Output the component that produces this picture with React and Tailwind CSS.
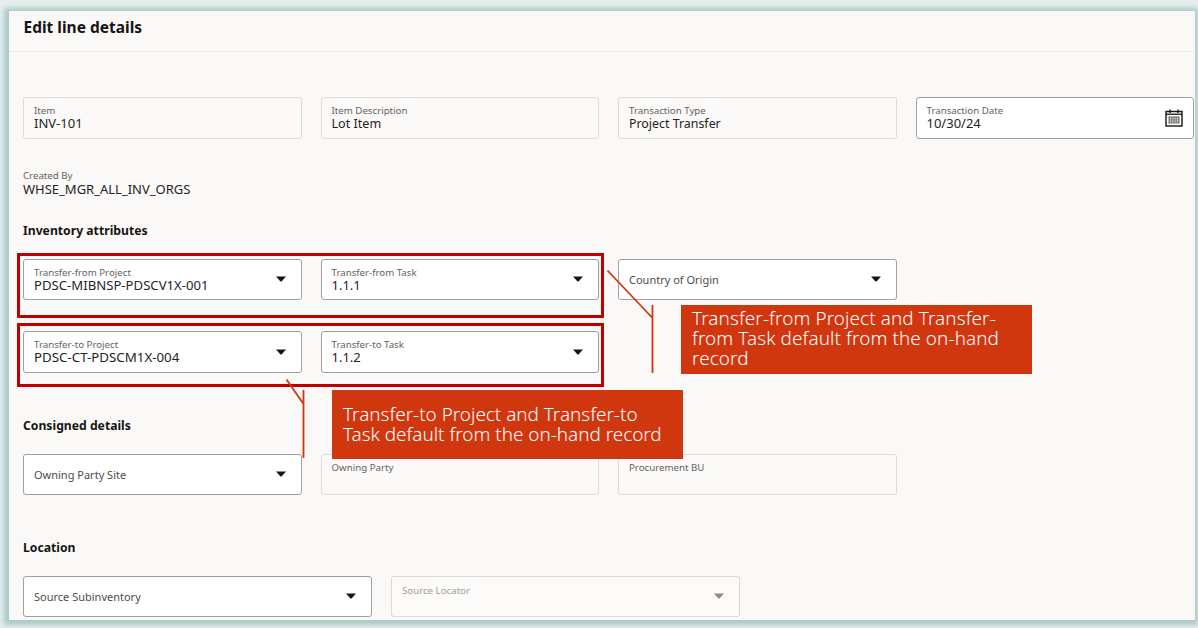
const FONT = "font-['Noto_Sans','Open_Sans',sans-serif]";

function Caret({ muted }) {
  return (
    <svg width="10" height="6" viewBox="0 0 10 6" className="shrink-0">
      <path d="M0 0.5h10L5.5 5.5h-1z" fill={muted ? "#8f8c88" : "#161513"} />
    </svg>
  );
}

function CalendarIcon() {
  return (
    <svg width="18" height="18" viewBox="0 0 18 18" className="shrink-0">
      <rect x="1" y="2.5" width="16" height="14.5" fill="none" stroke="#161513" strokeWidth="1.4" />
      <path d="M1 5.2h16" stroke="#161513" strokeWidth="1.3" />
      <path d="M5 0.5v3.5M13 0.5v3.5" stroke="#161513" strokeWidth="1.4" />
      <path d="M3.5 7.5h11v7h-11z" fill="#5f5c58" />
      <path d="M3.5 9.3h11M3.5 11.1h11M3.5 12.9h11M5.7 7.5v7M7.9 7.5v7M10.1 7.5v7M12.3 7.5v7" stroke="#f1efed" strokeWidth="0.5" />
    </svg>
  );
}

function Field({ label, value, valueClass = "text-[13px]", variant = "readonly", caret, calendar, floating }) {
  const box =
    variant === "active"
      ? "bg-white border-[#a3a09c]"
      : variant === "disabled"
      ? "bg-[#fcfbfa] border-[#dcdad7]"
      : "bg-[#fbfaf8] border-[#dedcd9]";
  return (
    <div className={`relative h-[41.5px] rounded-[3px] border flex items-center pl-[10px] pr-[15px] ${box}`}>
      <div className="flex-1 min-w-0">
        {floating ? (
          <div className="mt-[2px] text-[11px] leading-[14px] text-[#4f4c48]">{label}</div>
        ) : value ? (
          <div className="mt-[2px]">
            <div className="text-[9.7px] leading-[10px] text-[#65625e]">{label}</div>
            <div className={`leading-[15px] text-[#25231f] ${valueClass}`}>{value}</div>
          </div>
        ) : (
          <div className={variant === "disabled" ? "h-[22px]" : "h-[24px]"}>
            <div className={`text-[9.7px] leading-[11px] ${variant === "disabled" ? "text-[#a09d99]" : "text-[#65625e]"}`}>
              {label}
            </div>
          </div>
        )}
      </div>
      {caret && <Caret muted={caret === "muted"} />}
      {calendar && <div className="-mr-[5px]"><CalendarIcon /></div>}
    </div>
  );
}

function Heading({ children, className }) {
  return <h3 className={`text-[12.2px] leading-[16px] font-bold text-[#161513] ${className}`}>{children}</h3>;
}

function Row({ children, className = "" }) {
  return <div className={`grid grid-cols-4 gap-x-[19px] ${className}`}>{children}</div>;
}

function Callout({ className, children }) {
  return (
    <div className={`absolute bg-[#d1370f] text-white text-[18.9px] leading-[20px] font-light pl-[11px] whitespace-nowrap ${className}`}>
      {children}
    </div>
  );
}

export default function App() {
  return (
    <div className={`relative w-[1198px] h-[628px] overflow-hidden bg-[#e4eeed] ${FONT}`}>
      <div className="absolute left-[9px] top-[11px] w-[1186px] h-[609px] bg-[#faf9f7] shadow-[-1px_1px_5px_4px_#a9c9c6]">
        <header className="h-[41px] border-b border-[#efedeb] pl-[14.5px] pt-[6px]">
          <h2 className="text-[15.5px] leading-[20px] font-bold text-[#161513]">Edit line details</h2>
        </header>

        <div className="pl-[14px] pr-[1px]">
          <Row className="mt-[45px]">
            <Field label="Item" value="INV-101" />
            <Field label="Item Description" value="Lot Item" valueClass="text-[12.6px]" />
            <Field label="Transaction Type" value="Project Transfer" valueClass="text-[12.4px]" />
            <Field label="Transaction Date" value="10/30/24" variant="active" calendar />
          </Row>

          <div className="mt-[31px]">
            <div className="text-[9.7px] leading-[11px] text-[#65625e]">Created By</div>
            <div className="text-[13px] leading-[16px] text-[#25231f]">WHSE_MGR_ALL_INV_ORGS</div>
          </div>

          <Heading className="mt-[26px]">Inventory attributes</Heading>

          <Row className="mt-[20px]">
            <Field label="Transfer-from Project" value="PDSC-MIBNSP-PDSCV1X-001" valueClass="text-[13.15px]" variant="active" caret="1" />
            <Field label="Transfer-from Task" value="1.1.1" variant="active" caret="1" />
            <Field label="Country of Origin" variant="active" caret="1" floating />
          </Row>

          <Row className="mt-[31px]">
            <Field label="Transfer-to Project" value="PDSC-CT-PDSCM1X-004" valueClass="text-[13.3px]" variant="active" caret="1" />
            <Field label="Transfer-to Task" value="1.1.2" variant="active" caret="1" />
          </Row>

          <Heading className="mt-[45px]">Consigned details</Heading>

          <Row className="mt-[20px]">
            <Field label="Owning Party Site" variant="active" caret="1" floating />
            <Field label="Owning Party" />
            <Field label="Procurement BU" />
          </Row>

          <Heading className="mt-[45px]">Location</Heading>

          <div className="mt-[19.5px] flex gap-x-[19px]">
            <div className="w-[349px]">
              <Field label="Source Subinventory" variant="active" caret="1" floating />
            </div>
            <div className="w-[349px]">
              <Field label="Source Locator" variant="disabled" caret="muted" />
            </div>
          </div>
        </div>
      </div>

      {/* Annotation layer */}
      <div className="absolute left-[17px] top-[253px] w-[587px] h-[65px] border-[3px] border-[#c00000]" />
      <div className="absolute left-[17px] top-[323px] w-[587px] h-[64px] border-[3px] border-[#c00000]" />

      <svg className="absolute left-0 top-0" width="1198" height="628" viewBox="0 0 1198 628" fill="none">
        <path d="M607.5 270.5L652.5 318M652.5 305V373" stroke="#d1370f" strokeWidth="1.8" />
        <path d="M286.5 379.5L303.5 404M303.5 390V458" stroke="#d1370f" strokeWidth="1.8" />
      </svg>

      <Callout className="left-[681px] top-[305px] w-[351px] h-[69px] pt-[3px] tracking-[0.1px]">
        Transfer-from Project and Transfer-
        <br />
        from Task default from the on-hand
        <br />
        record
      </Callout>
      <Callout className="left-[332px] top-[390px] w-[351px] h-[69px] pt-[14px]">
        Transfer-to Project and Transfer-to
        <br />
        Task default from the on-hand record
      </Callout>
    </div>
  );
}
